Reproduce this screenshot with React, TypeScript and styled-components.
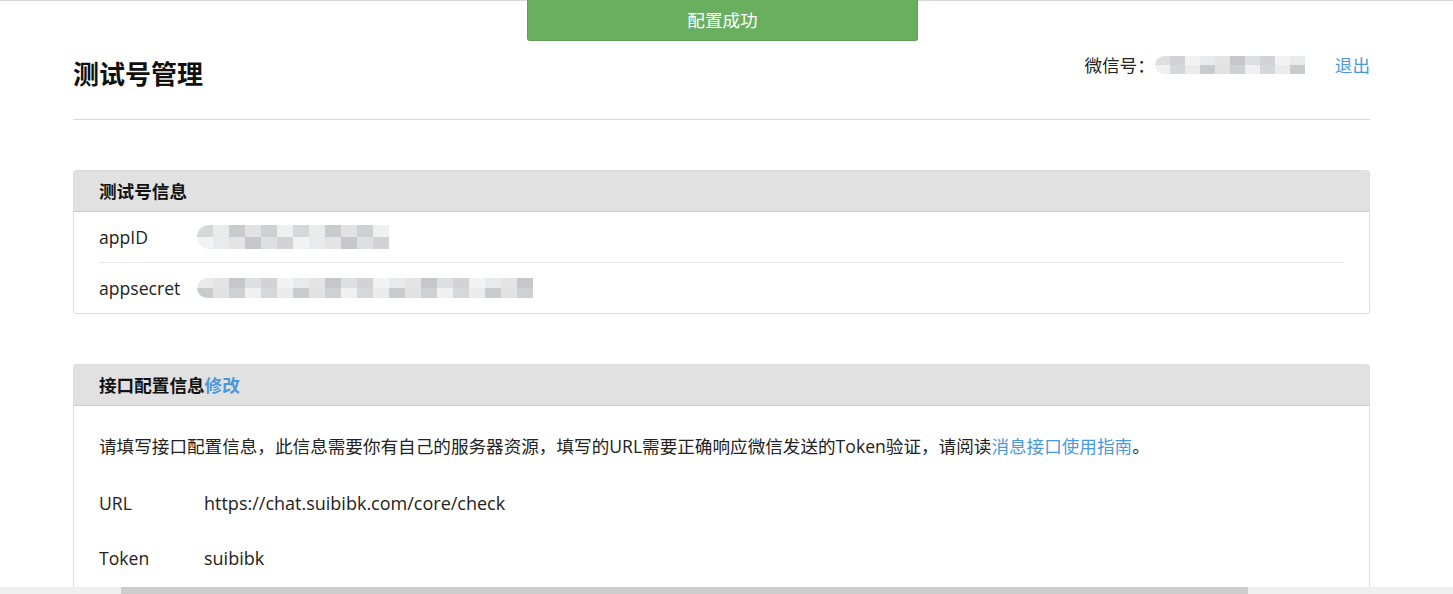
import styled, { createGlobalStyle } from 'styled-components';

const GlobalStyle = createGlobalStyle`
  html, body {
    margin: 0;
    padding: 0;
    overflow: hidden;
    background: #fff;
  }
  body {
    border-top: 1px solid #d6d6d6;
    font-family: "Open Sans", "Noto Sans CJK SC", sans-serif;
    font-size: 17.6px;
    color: #222;
  }
`;

const LINK = '#4a98dc';

const Page = styled.div`
  width: 1297px;
  margin-left: 73px;
`;

const Header = styled.div`
  display: flex;
  justify-content: space-between;
  align-items: flex-start;
  padding: 53px 0 28px;
  border-bottom: 1px solid #d9dadc;
`;

const Title = styled.h1`
  margin: 1px 0 0;
  font-family: "Noto Sans CJK SC", sans-serif;
  font-size: 26px;
  font-weight: 700;
  line-height: 36px;
  color: #111;
`;

const Account = styled.div`
  display: flex;
  align-items: center;
  height: 24px;
  line-height: 24px;
  margin-top: -1px;
`;

const AccountLabel = styled.span`
  font-family: "Noto Sans CJK SC", sans-serif;
  color: #222;
`;

const Link = styled.a`
  color: ${LINK};
  text-decoration: none;
  cursor: pointer;
`;

const Logout = styled(Link)`
  margin-left: 30px;
  font-family: "Noto Sans CJK SC", sans-serif;
`;

const Panel = styled.section`
  margin-top: 50px;
  border: 1px solid #dcdcdc;
  border-radius: 3px;
`;

const PanelHead = styled.div`
  height: 40px;
  line-height: 40px;
  padding: 0 25px;
  background: #e1e1e1;
  border-bottom: 1px solid #cdcdcd;
  font-family: "Noto Sans CJK SC", sans-serif;
  font-weight: 700;
  color: #111;
`;

const InfoList = styled.div`
  padding: 0 25px;
`;

const InfoRow = styled.div`
  display: flex;
  align-items: center;
  height: 50px;
  & + & {
    border-top: 1px solid #e6e6e6;
  }
`;

const InfoLabel = styled.span<{ $w: number }>`
  width: ${(p) => p.$w}px;
  flex-shrink: 0;
`;

const ConfigBody = styled.div`
  padding: 26px 25px 200px;
`;

const Intro = styled.p`
  margin: 0;
  line-height: 28px;
  color: #222;
`;

const ConfigRow = styled.div`
  display: flex;
  margin-top: 29px;
  line-height: 28px;
  & + & {
    margin-top: 27px;
  }
`;

const ConfigValue = styled.span`
  font-size: 18px;
`;

const Mosaic = styled.div<{ $h: number }>`
  display: grid;
  grid-auto-flow: column;
  grid-template-rows: repeat(2, ${(p) => p.$h / 2}px);
  filter: blur(0.6px);
  border-radius: ${(p) => p.$h / 2}px 0 0 ${(p) => p.$h / 2}px;
  overflow: hidden;
`;

const Cell = styled.div<{ $c: string; $w: number }>`
  width: ${(p) => p.$w}px;
  background: ${(p) => p.$c};
`;

const Toast = styled.div`
  position: fixed;
  top: 0;
  left: 527px;
  width: 389px;
  height: 40px;
  line-height: 40px;
  text-align: center;
  background: #6aaf5f;
  border: 1px solid #5e9f53;
  border-top: none;
  border-radius: 0 0 3px 3px;
  color: #fff;
  font-family: "Noto Sans CJK SC", sans-serif;
  font-size: 17.6px;
`;

const ScrollTrack = styled.div`
  position: fixed;
  left: 0;
  right: 0;
  bottom: 0;
  height: 7px;
  background: #f0f0f0;
`;

const ScrollThumb = styled.div`
  margin-left: 121px;
  width: 1127px;
  height: 100%;
  background: #cdcdcd;
`;

const shades = ['#e9eaec', '#cfd0d3', '#f0f0f0', '#d6d7da', '#e4e4e4', '#c7c7c9', '#dedfe1', '#ebebeb', '#cacbcd', '#e2e2e2', '#d3d3d5', '#f2f2f2'];

function Blur({ cols, cell, h, seed }: { cols: number; cell: number; h: number; seed: number }) {
  const cells = Array.from({ length: cols * 2 }, (_, i) => shades[(i * 7 + seed * 3 + (i % 3)) % shades.length]);
  return (
    <Mosaic $h={h}>
      {cells.map((c, i) => (
        <Cell key={i} $c={c} $w={cell} />
      ))}
    </Mosaic>
  );
}

export default function App() {
  return (
    <>
      <GlobalStyle />
      <Toast>配置成功</Toast>
      <Page>
        <Header>
          <Title>测试号管理</Title>
          <Account>
            <AccountLabel>微信号：</AccountLabel>
            <Blur cols={10} cell={15} h={18} seed={2} />
            <Logout>退出</Logout>
          </Account>
        </Header>

        <Panel>
          <PanelHead>测试号信息</PanelHead>
          <InfoList>
            <InfoRow>
              <InfoLabel $w={98}>appID</InfoLabel>
              <Blur cols={12} cell={16} h={24} seed={1} />
            </InfoRow>
            <InfoRow>
              <InfoLabel $w={98}>appsecret</InfoLabel>
              <Blur cols={21} cell={16} h={20} seed={4} />
            </InfoRow>
          </InfoList>
        </Panel>

        <Panel>
          <PanelHead>
            接口配置信息<Link>修改</Link>
          </PanelHead>
          <ConfigBody>
            <Intro>
              请填写接口配置信息，此信息需要你有自己的服务器资源，填写的URL需要正确响应微信发送的Token验证，请阅读
              <Link>消息接口使用指南</Link>。
            </Intro>
            <ConfigRow>
              <InfoLabel $w={105}>URL</InfoLabel>
              <ConfigValue>https://chat.suibibk.com/core/check</ConfigValue>
            </ConfigRow>
            <ConfigRow>
              <InfoLabel $w={105}>Token</InfoLabel>
              <ConfigValue>suibibk</ConfigValue>
            </ConfigRow>
          </ConfigBody>
        </Panel>
      </Page>
      <ScrollTrack>
        <ScrollThumb />
      </ScrollTrack>
    </>
  );
}
